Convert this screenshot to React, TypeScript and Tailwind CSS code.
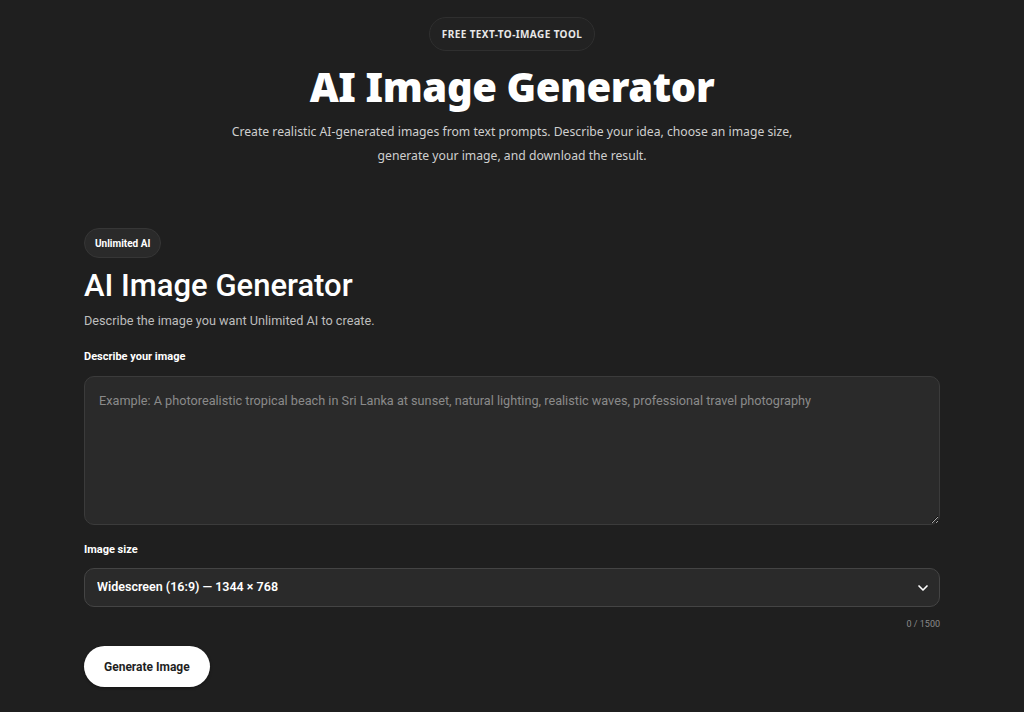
import { ChevronDown } from "lucide-react";

export default function App() {
  return (
    <div className="min-h-[712px] bg-[#1f1f1f] text-white">
      {/* Hero */}
      <header className="flex flex-col items-center pt-[17px] font-['Noto_Sans',sans-serif]">
        <span className="rounded-full border border-[#2f2f2f] bg-[#222222] px-[12px] h-[34px] flex items-center text-[10px] font-bold tracking-[0.04em] text-[#e8e8e8]">
          FREE TEXT-TO-IMAGE TOOL
        </span>
        <h1 className="mt-[10px] text-[40px] leading-[52px] font-black tracking-[-0.01em] text-white">
          AI Image Generator
        </h1>
        <p className="mt-[7px] whitespace-nowrap text-center text-[12.2px] leading-[24px] text-[#cfcfcf]">
          Create realistic AI-generated images from text prompts. Describe your idea, choose an image size,
          <br />
          generate your image, and download the result.
        </p>
      </header>

      {/* Tool */}
      <main className="mx-auto mt-[60px] w-[856px] font-['Roboto',sans-serif]">
        <span className="inline-flex h-[30px] items-center rounded-full border border-[#363636] bg-[#2a2a2a] px-[10px] text-[10px] font-bold text-white">
          Unlimited AI
        </span>
        <h2 className="mt-[9px] text-[31px] leading-[38px] font-medium text-white">AI Image Generator</h2>
        <p className="mt-[7px] text-[12.7px] leading-[18px] text-[#bdbdbd]">
          Describe the image you want Unlimited AI to create.
        </p>

        <label className="mt-[19px] block text-[11px] font-bold leading-[16px] text-white">
          Describe your image
        </label>
        <textarea
          className="mt-[11px] block h-[149px] w-full resize-y rounded-[10px] border border-[#3b3b3b] bg-[#2a2a2a] px-[14px] py-[15px] text-[12.7px] leading-[18px] text-white outline-none placeholder:text-[#8a8a8a]"
          placeholder="Example: A photorealistic tropical beach in Sri Lanka at sunset, natural lighting, realistic waves, professional travel photography"
        />

        <label className="mt-[17px] block text-[11px] font-bold leading-[16px] text-white">Image size</label>
        <div className="relative mt-[10px]">
          <select className="block h-[39px] w-full appearance-none rounded-[10px] border border-[#444444] bg-[#2a2a2a] px-[12px] text-[12.5px] font-semibold text-white outline-none">
            <option>Widescreen (16:9) — 1344 × 768</option>
          </select>
          <ChevronDown
            className="pointer-events-none absolute right-[9px] top-1/2 h-[16px] w-[16px] -translate-y-1/2 text-white"
            strokeWidth={2.5}
          />
        </div>
        <div className="mt-[11px] text-right text-[9px] leading-[12px] text-[#8a8a8a]">0 / 1500</div>

        <button className="mt-[16px] h-[41px] rounded-full bg-white px-[20px] text-[12px] font-bold text-[#1f1f1f] shadow-[0_1px_3px_rgba(0,0,0,0.4)]">
          Generate Image
        </button>
      </main>
    </div>
  );
}
